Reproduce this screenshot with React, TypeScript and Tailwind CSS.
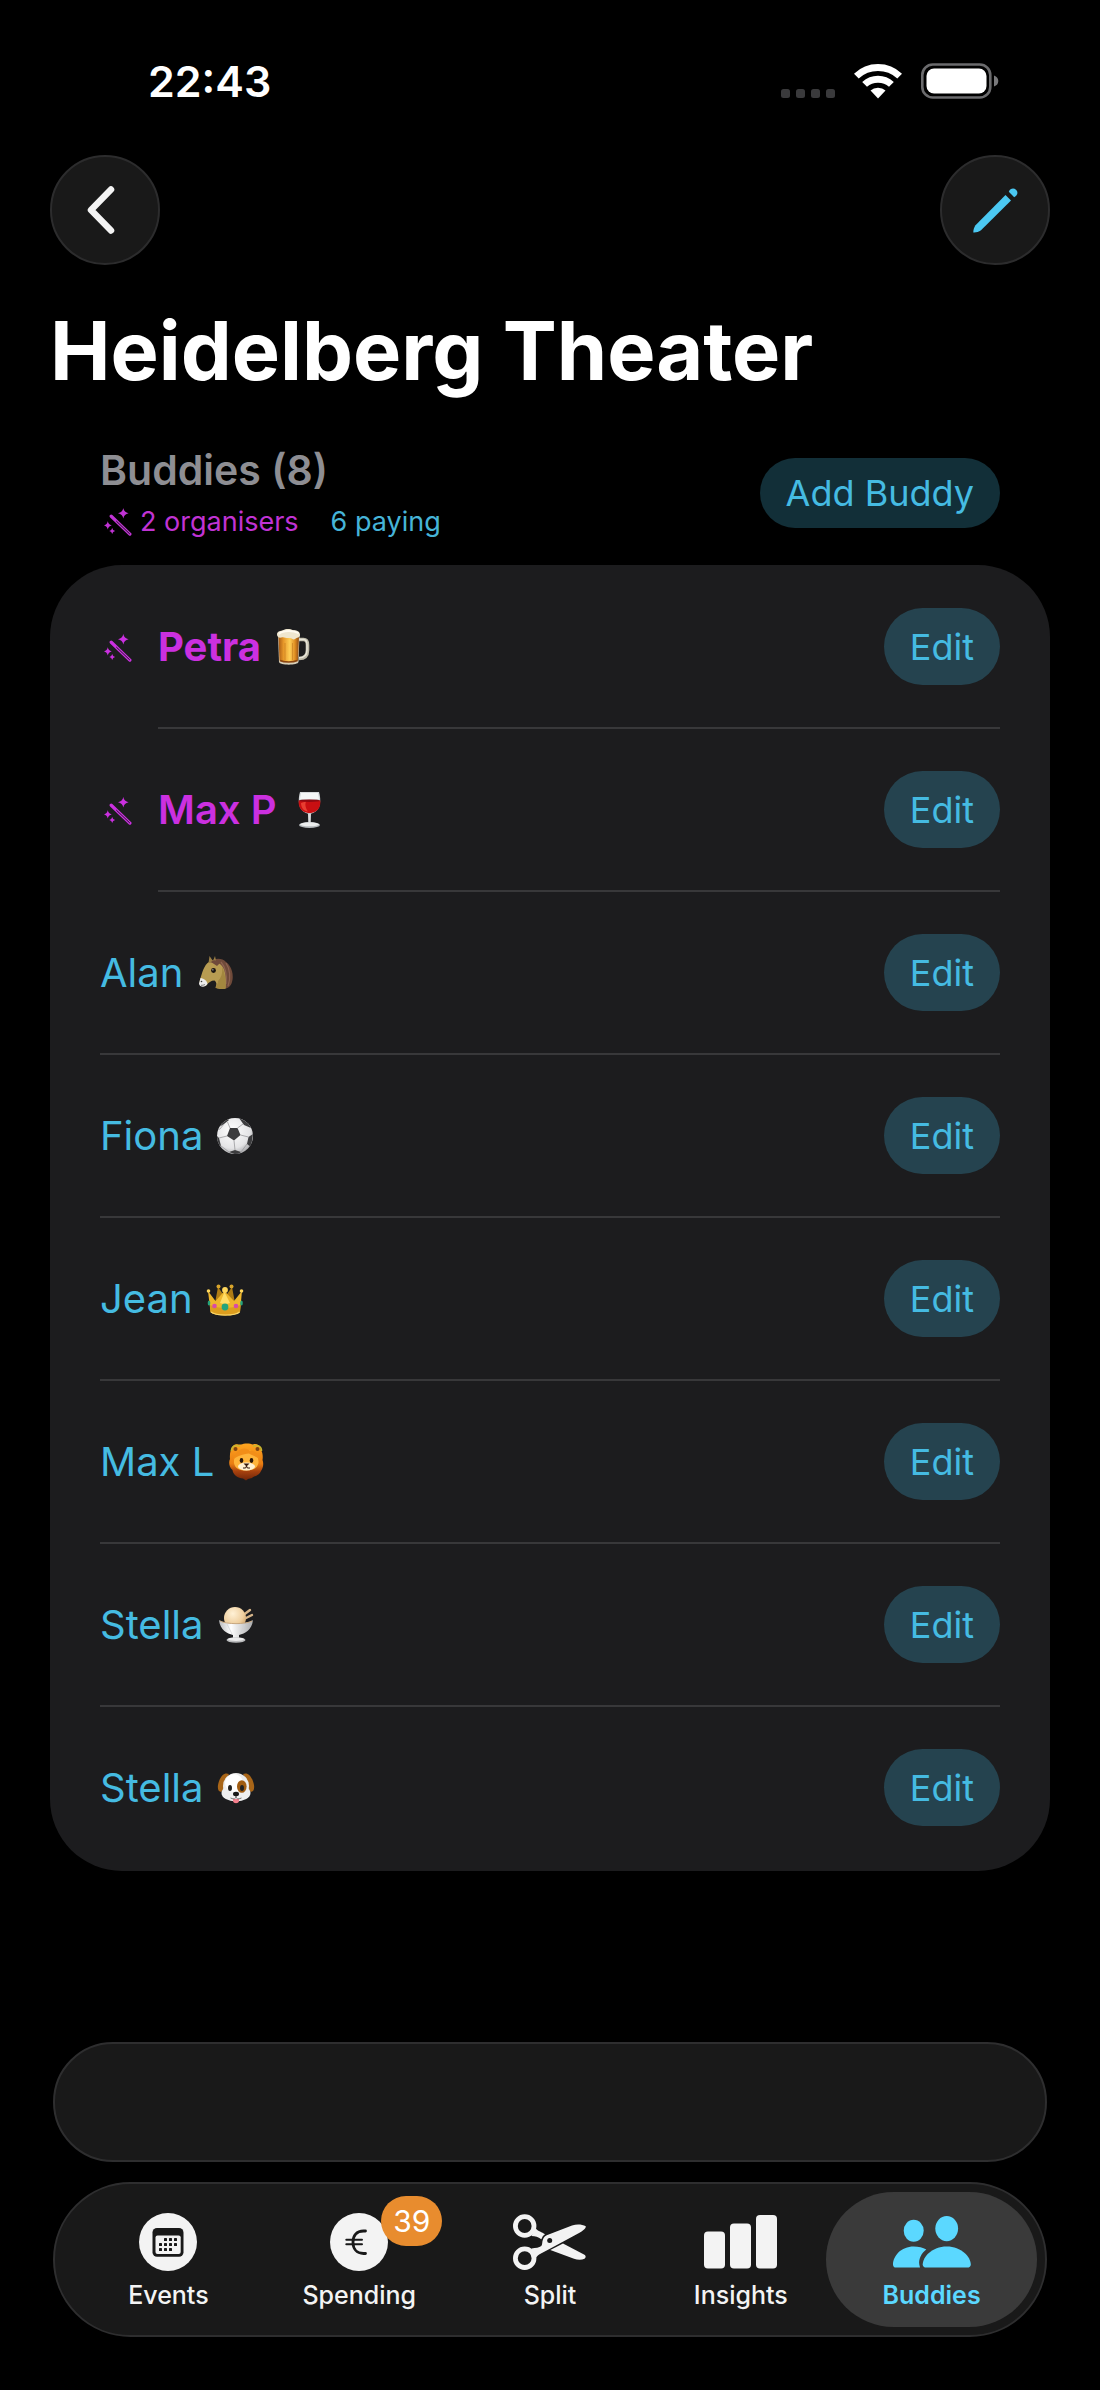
import React from 'react';

const buddies = [
  { name: 'Petra', emoji: Beer, organiser: true },
  { name: 'Max P', emoji: Wine, organiser: true },
  { name: 'Alan', emoji: Horse, organiser: false },
  { name: 'Fiona', emoji: SoccerBall, organiser: false },
  { name: 'Jean', emoji: Crown, organiser: false },
  { name: 'Max L', emoji: Lion, organiser: false },
  { name: 'Stella', emoji: IceCream, organiser: false },
  { name: 'Stella', emoji: Dog, organiser: false },
];

const tabs = [
  { label: 'Events', icon: CalendarIcon },
  { label: 'Spending', icon: EuroIcon, badge: 39 },
  { label: 'Split', icon: ScissorsIcon },
  { label: 'Insights', icon: BarsIcon },
  { label: 'Buddies', icon: PeopleIcon, active: true },
];

function Beer() {
  return (
    <svg viewBox="0 0 40 40" className="size-10" aria-hidden="true">
      <defs>
        <linearGradient id="beer" x1="0" x2="1">
          <stop offset="0" stopColor="#a85a14" />
          <stop offset=".25" stopColor="#e8992a" />
          <stop offset=".55" stopColor="#ffcf57" />
          <stop offset=".8" stopColor="#e08e22" />
          <stop offset="1" stopColor="#8f4a10" />
        </linearGradient>
      </defs>
      <path d="M25 12.500H30.500C34 12.500 34.500 15 34.500 18V23C34.500 28 32.500 31.500 26 31.500" fill="none" stroke="#bdb9a8" strokeWidth="3.600" />
      <path d="M25 12.500H30.500C33.500 12.500 34 15 34 18V23C34 27.500 32 30.800 26 30.800" fill="none" stroke="#e9e6da" strokeWidth="1.400" />
      <path d="M5 8H26.500L25.500 35C25 38.500 6.500 38.500 6 35Z" fill="#d8cfb8" />
      <path d="M5.500 9H26L25 33.500C22 35.500 9.500 35.500 6.500 33.500Z" fill="url(#beer)" />
      <path d="M12 16V33M19.500 16V33" stroke="#b96d17" strokeWidth=".8" opacity=".6" />
      <path d="M7 33.500C11 35.500 20 35.500 24.500 33.500" fill="none" stroke="#8a4510" strokeWidth="1.500" />
      <path d="M4 7.500C4 4 8 4 10 3.300C13 1.200 18 2 20 3.200C24 3 27.500 4.500 27 8.500C26.500 11 24 10 22 12C20 13.500 19 10.500 16 11C13 11.500 11 9.500 8.500 10.500C6 11 4 10 4 7.500Z" fill="#efe6cf" />
      <path d="M6.500 6.500C10 3.500 20 3 25 6" fill="none" stroke="#fffaf0" strokeWidth="1.800" strokeLinecap="round" />
    </svg>
  );
}

function Wine() {
  return (
    <svg viewBox="0 0 40 40" className="size-10" aria-hidden="true">
      <path d="M11 2H30C32 9 33 22 20.500 24C8 22 9 9 11 2Z" fill="#d5d8da" />
      <path d="M12 3H29L30 9H11Z" fill="#f4f6f6" />
      <path d="M9.700 10.500H31.300C32 18 28 22.800 20.500 23.200C13 22.800 9 18 9.700 10.500Z" fill="#c90f12" />
      <path d="M12 13C12 18 15 21 19 21.500C16 17 16 14 17 11.500Z" fill="#f5523f" opacity=".7" />
      <ellipse cx="20.500" cy="10.700" rx="10.600" ry="1.200" fill="#8e0a12" />
      <path d="M19 23.500H22L21.700 33H19.300Z" fill="#d9dcde" />
      <ellipse cx="20.500" cy="35" rx="10.500" ry="3" fill="#b5babd" />
      <ellipse cx="20.500" cy="34.300" rx="9.500" ry="2" fill="#eceeee" />
    </svg>
  );
}

function Horse() {
  return (
    <svg viewBox="0 0 40 40" className="size-10" aria-hidden="true">
      <path d="M15 9C19 5 27 4.500 31 9C37 13 39 23 37 29C36 33 33 35.500 30 35.500L27 20Z" fill="#6f4a3a" />
      <path d="M31 10C35 16 36 25 33 33M26 9C31 15 32 23 31 31" fill="none" stroke="#8d6350" strokeWidth="1.200" />
      <path d="M14 9C18 7.500 24 9 27 13C31 18 31 28 30.500 35.500C27 36.500 23 36 20.500 34.500C22 31 21.500 29 19.500 27.500C16 27.500 13.500 29.500 11 32.500C7 34.500 3.500 31.500 5 27C7 20 9 12 14 9Z" fill="#b89c52" />
      <path d="M23 28C26 25 28 20 27 14C30 19 31 28 30.500 35.500C27 36.500 23 36 20.500 34.500C22 32 23 30 23 28Z" fill="#a3873f" />
      <path d="M5.500 25C9 25.500 12 27.500 12.500 31C10 35 4.500 34.500 4 30.500Z" fill="#ececec" />
      <path d="M13.500 10L14.500 3L18 8L20 3L21.500 10Z" fill="#9a7f45" />
      <path d="M16 9C19 6 22 7 25 10L22 13Z" fill="#6f4a3a" />
      <circle cx="18.500" cy="17.500" r="2.400" fill="#191311" />
      <circle cx="17.900" cy="16.800" r=".6" fill="#fff" />
      <circle cx="6.500" cy="28.500" r=".8" fill="#3b3b3b" />
      <path d="M6 32.300Q8 32.500 10 31.500" fill="none" stroke="#666" strokeWidth=".8" />
    </svg>
  );
}

function SoccerBall() {
  return (
    <svg viewBox="0 0 40 40" className="size-10" aria-hidden="true">
      <defs>
        <radialGradient id="ball" cx=".42" cy=".35" r=".7">
          <stop offset="0" stopColor="#fff" />
          <stop offset=".7" stopColor="#e4e4e6" />
          <stop offset="1" stopColor="#a3a3a6" />
        </radialGradient>
        <clipPath id="ball-clip">
          <circle cx="20" cy="20" r="18" />
        </clipPath>
      </defs>
      <circle cx="20" cy="20" r="18" fill="url(#ball)" />
      <g clipPath="url(#ball-clip)">
        <g fill="#3c3c3e">
          <path d="M15 12H22.500L25.500 19L19 24.500L12 20Z" />
          <path d="M11 1L14 4L9 8L4 11Z" />
          <path d="M24 2L33 6L36 12L29 9Z" />
          <path d="M2 20L4 22L6 30L2 28Z" />
          <path d="M38 18L33.500 21L32 28L36 31Z" />
          <path d="M14 36L20 34L26 36L22 39Z" />
        </g>
        <path d="M15 12L12.500 6M22.500 12L28 8M25.500 19L33.500 21M19 24.500L20 34M12 20L4 22M9 8L5 13L2 14M6 30L14 36M32 28L26 36" fill="none" stroke="#99999c" strokeWidth=".8" />
      </g>
    </svg>
  );
}

function Crown() {
  return (
    <svg viewBox="0 0 40 40" className="size-10" aria-hidden="true">
      <path d="M10 24L13 8L20 18L27 8L30 24Z" fill="#b07d14" />
      <circle cx="13.500" cy="7.500" r="2" fill="#d9a52c" />
      <circle cx="26.500" cy="7.500" r="2" fill="#d9a52c" />
      <path d="M3 12L10.500 22L19.500 12L29 22L37 12L35 33C31 37.500 9 37.500 5.500 33Z" fill="#eeb62c" />
      <path d="M5 26C13 30 27 30 35.500 26L35 33C31 37.500 9 37.500 5.500 33Z" fill="#dc9d1e" />
      <path d="M6 33C11 37 30 37 34.500 33" fill="none" stroke="#f7d56b" strokeWidth="1.200" />
      <path d="M19.500 13L15 24Q20 26 25 24Z" fill="#ffdd66" />
      <circle cx="3.500" cy="12" r="1.800" fill="#ffd75c" />
      <circle cx="36.500" cy="12" r="1.800" fill="#ffd75c" />
      <circle cx="20" cy="11" r="2.900" fill="#ffd75c" />
      <circle cx="20" cy="28" r="3.400" fill="#24a47c" />
      <circle cx="9.500" cy="27" r="2.300" fill="#d84aa8" />
      <circle cx="31" cy="27" r="2.300" fill="#d84aa8" />
      <ellipse cx="4" cy="24" rx="1.300" ry="2.500" fill="#24a47c" />
      <ellipse cx="36.500" cy="24" rx="1.300" ry="2.500" fill="#24a47c" />
    </svg>
  );
}

function Lion() {
  return (
    <svg viewBox="0 0 40 40" className="size-10" aria-hidden="true">
      <defs>
        <linearGradient id="mane" x1="0" x2="0" y1="0" y2="1">
          <stop offset="0" stopColor="#ffa51f" />
          <stop offset=".55" stopColor="#e97d12" />
          <stop offset=".75" stopColor="#a8420e" />
          <stop offset="1" stopColor="#6e2409" />
        </linearGradient>
      </defs>
      <path d="M7 4C10 1 13 3 15 2.500C18 1 24 1 27 2.500C30 1 34 3 34.500 7C37 11 37 15 36.500 18C38 22 37 26 35 29C33 34 28 34 26 36L22 37L20 38.500L17 36.500C12 36 7 33 6.500 28C3 25 2.500 20 4 17C3.500 12 4.500 7 7 4Z" fill="url(#mane)" />
      <path d="M5.500 9C5.500 3.500 10 2.500 14 4.500" fill="none" stroke="#c9b52f" strokeWidth="1.600" />
      <path d="M35.500 9C35.500 3.500 31 2.500 27 4.500" fill="none" stroke="#c9b52f" strokeWidth="1.600" />
      <circle cx="9.500" cy="7" r="2" fill="#7d4312" />
      <circle cx="31.500" cy="7" r="2" fill="#7d4312" />
      <path d="M8 21C7 11 15 8 20.500 8C26 8 33 11 32.500 21C31 27 26 28.500 20.500 28.500C14 28.500 9 27 8 21Z" fill="#ffb43a" />
      <path d="M7 18C10 6 20 4 24 9C28 8 33 12 34 18C31 14.500 27 14 23 11.500C17 12 11 14 7 18Z" fill="#f28e18" />
      <ellipse cx="20.500" cy="24.500" rx="8.500" ry="4" fill="#fff0d0" />
      <ellipse cx="15.500" cy="18.500" rx="1.800" ry="2.400" fill="#2b1709" />
      <ellipse cx="25.500" cy="18.500" rx="1.800" ry="2.400" fill="#2b1709" />
      <path d="M17.500 21.500H23.500L20.500 24.500Z" fill="#35180c" />
      <path d="M17 26Q20.500 27 20.500 24Q20.500 27 24 26" fill="none" stroke="#35180c" />
    </svg>
  );
}

function IceCream() {
  return (
    <svg viewBox="0 0 40 40" className="size-10" aria-hidden="true">
      <defs>
        <radialGradient id="scoop" cx=".4" cy=".3" r=".8">
          <stop offset="0" stopColor="#fff1d6" />
          <stop offset=".6" stopColor="#efcf9f" />
          <stop offset="1" stopColor="#c69659" />
        </radialGradient>
        <linearGradient id="bowl" x1="0" x2="1">
          <stop offset="0" stopColor="#b9babc" />
          <stop offset=".35" stopColor="#fff" />
          <stop offset="1" stopColor="#a9aaac" />
        </linearGradient>
      </defs>
      <path d="M28 9.500L34 5M30 13L36 10" stroke="#d6b58a" strokeWidth="2.400" strokeLinecap="round" />
      <circle cx="19" cy="13" r="11" fill="url(#scoop)" />
      <path d="M3 15C8 19.500 32 19.500 37 15C36 25 29 28.500 23 30V33H17V30C11 28.500 4 25 3 15Z" fill="url(#bowl)" />
      <path d="M4 16C10 19.500 30 19.500 36 16" fill="none" stroke="#c8a880" />
      <path d="M11 19L16 29M29 19L24 29" stroke="#cfd0d2" strokeWidth=".7" />
      <ellipse cx="20" cy="35" rx="9.500" ry="2.800" fill="#b8b9bb" />
      <ellipse cx="20" cy="34.300" rx="8" ry="1.700" fill="#ebebec" />
    </svg>
  );
}

function Dog() {
  return (
    <svg viewBox="0 0 40 40" className="size-10" aria-hidden="true">
      <path d="M13 6C8 3.500 3.500 9 2 17C1.300 22 3 24.500 5.500 23.500C9 21 8.500 12 13 6Z" fill="#a86518" />
      <path d="M27 6C32 3.500 36.500 9 38 17C38.700 22 37 24.500 34.500 23.500C31 21 31.500 12 27 6Z" fill="#a86518" />
      <ellipse cx="20" cy="18" rx="13" ry="13" fill="#ececec" />
      <ellipse cx="20" cy="25" rx="14.500" ry="8.500" fill="#efefef" />
      <ellipse cx="18" cy="15" rx="9" ry="9" fill="#fff" />
      <ellipse cx="25.800" cy="18.500" rx="4.800" ry="6.300" fill="#a05c12" />
      <ellipse cx="14" cy="20" rx="2" ry="3" fill="#222" />
      <ellipse cx="26" cy="20" rx="2" ry="3" fill="#222" />
      <ellipse cx="20" cy="26" rx="3" ry="2.200" fill="#161616" />
      <path d="M17 31H23V33C22.500 36 17.500 36 17 33Z" fill="#f47f8d" />
      <path d="M14.500 30Q20 32.500 20 28Q20 32.500 25.500 30" fill="none" stroke="#555" strokeWidth=".8" />
    </svg>
  );
}

function WandIcon() {
  return (
    <svg viewBox="0 0 29 29" className="size-7 shrink-0" fill="currentColor" aria-hidden="true">
      <path d="M7.500 8.500L26.800 27" stroke="currentColor" strokeWidth="3.400" strokeLinecap="round" />
      <path d="M13 13.800L26.500 26.700" stroke="#1c1c1e" strokeWidth="1" strokeLinecap="round" />
      <path d="M20 0Q20.800 4.500 25.500 5.400Q20.800 6.300 20 11Q19.200 6.300 14.500 5.400Q19.200 4.500 20 0Z" />
      <path d="M3.900 13.800Q4.600 17.300 8 18Q4.600 18.700 3.900 22.200Q3.200 18.700 0 18Q3.200 17.300 3.900 13.800Z" />
      <path d="M8.500 20.700Q9 23.300 11.500 23.800Q9 24.300 8.500 26.900Q8 24.300 5.500 23.800Q8 23.300 8.500 20.700Z" />
    </svg>
  );
}

function CalendarIcon() {
  const dots = [
    [26, 27], [31, 27], [36, 27],
    [21, 32], [26, 32], [31, 32], [36, 32],
    [21, 37], [26, 37], [31, 37],
  ];
  return (
    <svg viewBox="0 0 58 58" className="size-[58px]" aria-hidden="true">
      <circle cx="29" cy="29" r="29" fill="#f3f3f3" />
      <rect x="13.500" y="15" width="31" height="28.700" rx="4.500" fill="#191919" />
      <rect x="16.500" y="22.500" width="25.200" height="18.500" rx="2" fill="#f3f3f3" />
      {dots.map(([x, y]) => (
        <rect key={`${x}-${y}`} x={x - 1} y={y - 2} width="3" height="3" rx=".6" fill="#191919" />
      ))}
    </svg>
  );
}

function EuroIcon() {
  return (
    <svg viewBox="0 0 58 58" className="size-[58px]" aria-hidden="true">
      <circle cx="29" cy="29" r="29" fill="#f3f3f3" />
      <path d="M35.500 18H33.500C26.500 18 23 23 23 29.200C23 35.500 26.500 40.500 33.500 40.500H35.500" fill="none" stroke="#191919" strokeWidth="2.800" strokeLinecap="round" />
      <path d="M16.300 26.800H32M16.300 31.300H32" stroke="#191919" strokeWidth="2" strokeLinecap="round" />
    </svg>
  );
}

function ScissorsIcon() {
  return (
    <svg viewBox="0 0 73 56" className="h-14 w-[73px]" fill="#f3f3f3" aria-hidden="true">
      <circle cx="11.700" cy="12" r="9.300" fill="none" stroke="#f3f3f3" strokeWidth="4.800" />
      <circle cx="11.700" cy="44.200" r="9.300" fill="none" stroke="#f3f3f3" strokeWidth="4.800" />
      <path d="M22.500 14C25 17.500 29 18 32 20.300Q29 22 28.300 25.200C25 23 22.500 22 18.500 22Z" />
      <path d="M18.500 34.500C23 34 26 33.500 28.300 32C29.500 30.500 29 28 29.800 26C30.700 23 32.500 21.800 35 20.800L59 11.500C64 9.800 69 10.300 72.800 12.300C73 14.500 70 16.800 66.500 18.700L36 35.200L27 40C24.500 41 24 43 22.500 44Z" />
      <path d="M37.300 36L50 29.400L71 40.500C73 41.700 73.200 43.500 71.500 44.700C68.500 46.300 64.500 46 61 44.800Z" />
      <circle cx="36.700" cy="26.500" r="2.500" fill="#191919" />
    </svg>
  );
}

function BarsIcon() {
  return (
    <svg viewBox="0 0 73 54" className="h-[54px] w-[73px]" fill="#f3f3f3" aria-hidden="true">
      <rect x="0" y="16.500" width="21" height="37" rx="4" />
      <rect x="26" y="8.500" width="21" height="45" rx="4" />
      <rect x="52" y="0" width="21" height="53.500" rx="4" />
    </svg>
  );
}

function PeopleIcon() {
  return (
    <svg viewBox="0 0 78 52" className="h-[52px] w-[78px]" fill="#5bd8ff" aria-hidden="true">
      <ellipse cx="20.700" cy="14.700" rx="10" ry="11" />
      <ellipse cx="53.700" cy="12.600" rx="11.400" ry="12.600" />
      <path d="M3 51.600C1 51.600 0 50.500 0 48.500C0 40 8 30.400 20.700 30.400C25.500 30.400 30 31.500 33.300 33.600C28.500 37 25.500 43 26.300 48.500L27 51.600Z" />
      <path d="M33.500 51.600C31 51.600 29.700 50.500 29.700 48.500C29.700 41 39 30.400 53.700 30.400C68.500 30.400 77.800 41 77.800 48.500C77.800 50.500 76.500 51.600 74 51.600Z" />
    </svg>
  );
}

function StatusBar() {
  return (
    <div className="flex h-12 items-center justify-between pr-[101px] pl-[148px]">
      <span className="text-[43px] leading-[48px] font-semibold">22:43</span>
      <div className="flex items-center">
        <svg viewBox="0 0 54 36" className="h-9 w-[54px]" fill="#3a3a3c" aria-hidden="true">
          <rect x="0" y="26" width="9" height="9" rx="2.500" />
          <rect x="15" y="26" width="9" height="9" rx="2.500" />
          <rect x="30" y="26" width="9" height="9" rx="2.500" />
          <rect x="45" y="26" width="9" height="9" rx="2.500" />
        </svg>
        <svg viewBox="0 0 48 36" className="ml-[19px] h-9 w-12" fill="#fff" aria-hidden="true">
          <path d="M0 10.700Q10 1 24 1Q38 1 48 10.700L43.300 15.400Q35 8 24 8Q13 8 4.700 15.400Z" />
          <path d="M8.200 19Q15 12.800 24 12.800Q33 12.800 39.800 19L35 23.700Q30.500 19.800 24 19.800Q17.500 19.800 13 23.700Z" />
          <path d="M16.500 27.500Q19.500 24.700 24 24.700Q28.500 24.700 31.500 27.500L24 35.500Z" />
        </svg>
        <svg viewBox="0 0 78 36" className="ml-[19px] h-9 w-[78px]" aria-hidden="true">
          <rect x="1.300" y="1.500" width="68" height="33" rx="10.500" fill="none" stroke="#6b6b6d" strokeWidth="2.600" />
          <rect x="5.500" y="5.500" width="60" height="25" rx="7.500" fill="#fff" />
          <path d="M73 12.500Q77.300 14 77.300 18Q77.300 22 73 23.500Z" fill="#7a7a7c" />
        </svg>
      </div>
    </div>
  );
}

export default function App() {
  return (
    <div className="flex min-h-screen flex-col bg-black pt-[57px] pb-[53px] font-['Inter','Liberation_Sans',sans-serif] text-white">
      <StatusBar />

      <header className="px-[50px] pt-[50px]">
        <div className="flex items-center justify-between">
          <button aria-label="Back" className="flex size-[110px] items-center justify-center rounded-full border-2 border-[#2c2c2d] bg-[#191919] pr-2">
            <svg viewBox="0 0 28 48" className="h-12 w-7" aria-hidden="true">
              <path d="M24 3.500L4 24L24 44.500" fill="none" stroke="#f3f3f3" strokeWidth="6.500" strokeLinecap="round" strokeLinejoin="round" />
            </svg>
          </button>
          <button aria-label="Edit event" className="flex size-[110px] items-center justify-center rounded-full border-2 border-[#2c2c2d] bg-[#191919]">
            <svg viewBox="0 0 45 45" className="size-[45px]" fill="#4bc8f2" aria-hidden="true">
              <path d="M.3 44.500C.2 42 1 39.500 2.500 37.200L32.500 7L38 12.500L8 42.300C5.500 44 3 44.700 .3 44.500Z" />
              <path d="M35.800 3.800C37 .5 40.500 -.5 43 1.700C45.500 4.200 44.500 7.800 41.200 9.200Z" />
            </svg>
          </button>
        </div>
        <h1 className="mt-[38px] text-[81px] leading-[96px] font-bold">Heidelberg Theater</h1>
      </header>

      <main className="px-[50px] pt-[43px]">
        <div className="flex items-center justify-between px-[50px] pb-[21px]">
          <div>
            <h2 className="text-[41px] leading-[56px] font-semibold text-[#8e8e93]">Buddies (8)</h2>
            <p className="mt-0.5 flex items-center text-[27px] leading-[44px]">
              <span className="flex items-center gap-2 pl-1 text-[#c033d4]">
                <WandIcon />
                2 organisers
              </span>
              <span className="ml-8 text-[#46b4d8]">6 paying</span>
            </p>
          </div>
          <button className="h-[70px] rounded-full bg-[#122f38] px-[26px] text-[36px] leading-[44px] text-[#45bbe2]">
            Add Buddy
          </button>
        </div>

        <ul className="rounded-[72px] bg-[#1c1c1e] px-[50px] pt-px pb-[3px]">
          {buddies.map((buddy, index) => {
            const Emoji = buddy.emoji;
            return (
              <li key={index} className="group flex items-center">
                {buddy.organiser && (
                  <span className="w-[58px] pl-1 text-[#cb30e0]">
                    <WandIcon />
                  </span>
                )}
                <div className="flex flex-1 items-center justify-between border-b-2 border-[#38383a] py-[42px] group-last:border-b-0">
                  <span
                    className={
                      buddy.organiser
                        ? 'flex items-center gap-3 text-[40px] leading-[48px] font-semibold text-[#cb30e0] group-first:font-bold'
                        : 'flex items-center gap-3 text-[40px] leading-[48px] text-[#45bbe2]'
                    }
                  >
                    {buddy.name}
                    <Emoji />
                  </span>
                  <button className="h-[77px] rounded-full bg-[#25434f] px-[26px] text-[36px] leading-[44px] text-[#45bbe2]">
                    Edit
                  </button>
                </div>
              </li>
            );
          })}
        </ul>
      </main>

      <footer className="mt-auto flex flex-col gap-5 px-[53px] pt-10">
        <div className="h-[120px] rounded-full border-2 border-[#2e2e2f] bg-[#191919]" />
        <nav className="grid grid-cols-5 rounded-full border-2 border-[#2e2e2f] bg-[#191919] px-[18px] py-2">
          {tabs.map((tab) => {
            const Icon = tab.icon;
            return (
              <a
                key={tab.label}
                href="#"
                aria-current={tab.active ? 'page' : undefined}
                className={
                  tab.active
                    ? '-mx-[10px] flex h-[135px] flex-col items-center rounded-full bg-[#3a3a3a] pt-5 font-semibold text-[#5bd8ff]'
                    : 'flex h-[135px] flex-col items-center pt-5 font-medium text-[#f3f3f3]'
                }
              >
                <span className="relative flex h-[60px] items-center">
                  <Icon />
                  {tab.badge && (
                    <span className="absolute -top-4 left-[51px] flex h-[50px] items-center rounded-full bg-[#e88c2e] px-3 text-[30px] font-normal text-white">
                      {tab.badge}
                    </span>
                  )}
                </span>
                <span className="mt-[7px] text-[25px] leading-8">{tab.label}</span>
              </a>
            );
          })}
        </nav>
      </footer>
    </div>
  );
}
